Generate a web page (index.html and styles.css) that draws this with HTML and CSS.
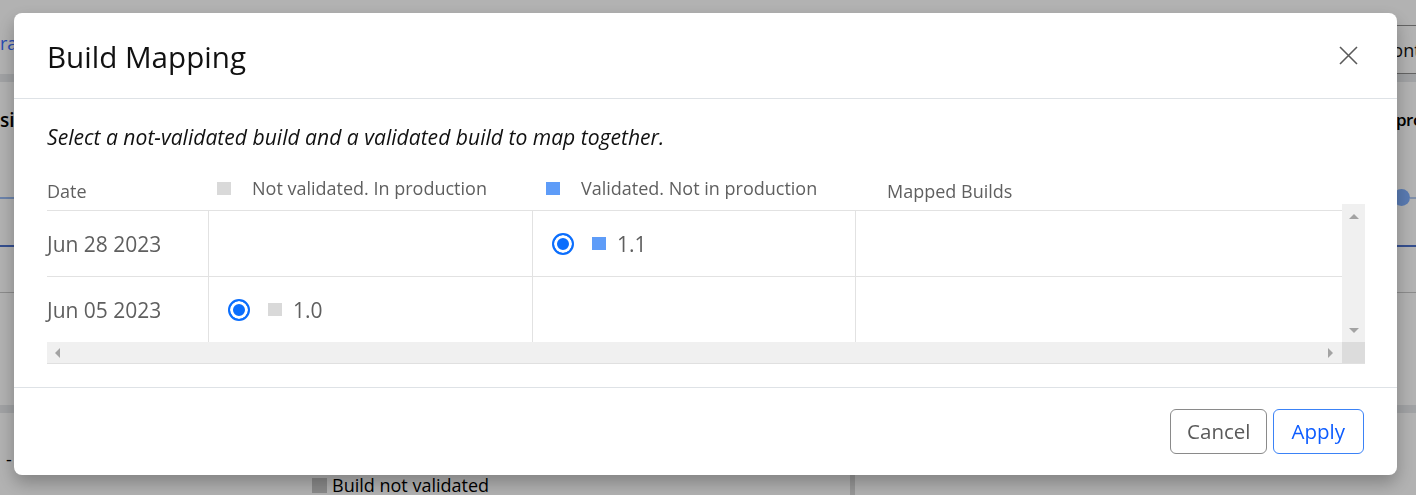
FILE: index.html
```html
<!DOCTYPE html>
<html lang="en">
<head>
<meta charset="utf-8">
<title>Build Mapping</title>
<link rel="stylesheet" href="styles.css">
</head>
<body>
<div class="page">
  <div class="page-top"></div>
  <nav class="page-tabs">
    <a class="nav-link">ra</a>
    <span class="tab-box">Content</span>
  </nav>
  <div class="page-band"></div>
  <div class="page-headings">
    <h2 class="heading-left">si</h2>
    <h2 class="heading-right">production</h2>
  </div>
  <div class="page-slider">
    <span class="track"></span>
    <span class="knob"></span>
    <span class="track-end"></span>
  </div>
  <div class="rule rule-dark"></div>
  <div class="page-section"></div>
  <div class="rule"></div>
  <div class="page-spacer"></div>
  <div class="page-band"></div>
  <div class="page-summary"><span class="dash">-</span></div>
  <div class="page-legend">
    <div class="legend-item"><span class="legend-swatch"></span>Build not validated</div>
    <div class="legend-panel"></div>
  </div>
</div>

<div class="backdrop"></div>

<div class="modal" role="dialog" aria-labelledby="mapping-title">
  <div class="modal-header">
    <h1 class="modal-title" id="mapping-title">Build Mapping</h1>
    <button class="close-btn" type="button" aria-label="Close">
      <svg width="19" height="19" viewBox="0 0 19 19" aria-hidden="true">
        <path d="M1 1 L18 18 M18 1 L1 18" stroke="#5a5a5a" stroke-width="1.6" fill="none"/>
      </svg>
    </button>
  </div>

  <div class="modal-body">
    <p class="hint">Select a not-validated build and a validated build to map together.</p>

    <div class="map-head">
      <div class="th th-plain">Date</div>
      <div class="th"><span class="swatch swatch-gray"></span>Not validated. In production</div>
      <div class="th"><span class="swatch swatch-blue"></span>Validated. Not in production</div>
      <div class="th th-plain">Mapped Builds</div>
    </div>

    <div class="map-scroll">
      <div class="map-rows">
        <div class="map-row">
          <div class="td td-date">Jun 28 2023</div>
          <div class="td"></div>
          <div class="td">
            <label class="build"><input type="radio" name="validated" checked><span class="swatch swatch-blue"></span>1.1</label>
          </div>
          <div class="td"></div>
        </div>
        <div class="map-row">
          <div class="td td-date">Jun 05 2023</div>
          <div class="td">
            <label class="build"><input type="radio" name="unvalidated" checked><span class="swatch swatch-gray"></span>1.0</label>
          </div>
          <div class="td"></div>
          <div class="td"></div>
        </div>
      </div>

      <div class="vscroll">
        <svg width="10" height="5" viewBox="0 0 10 5" aria-hidden="true"><polygon points="0,5 10,5 5,0" fill="#a3a3a3"/></svg>
        <svg width="10" height="5" viewBox="0 0 10 5" aria-hidden="true"><polygon points="0,0 10,0 5,5" fill="#a3a3a3"/></svg>
      </div>
      <div class="hscroll">
        <svg width="5" height="10" viewBox="0 0 5 10" aria-hidden="true"><polygon points="5,0 5,10 0,5" fill="#a3a3a3"/></svg>
        <svg width="5" height="10" viewBox="0 0 5 10" aria-hidden="true"><polygon points="0,0 0,10 5,5" fill="#a3a3a3"/></svg>
      </div>
      <div class="scroll-corner"></div>
    </div>
  </div>

  <div class="modal-footer">
    <button class="btn btn-cancel" type="button">Cancel</button>
    <button class="btn btn-apply" type="button">Apply</button>
  </div>
</div>
</body>
</html>
```

FILE: styles.css
```css
* {
  box-sizing: border-box;
}

html,
body {
  margin: 0;
  height: 100%;
}

body {
  background: #ffffff;
  overflow: hidden;
  font-family: "Open Sans", "Noto Sans", sans-serif;
  color: #212529;
}

/* ---------- page underneath the dialog ---------- */

.page {
  height: 495px;
  display: flex;
  flex-direction: column;
  color: #000;
}

.page-top {
  height: 25px;
  flex: none;
}

.page-tabs {
  height: 49px;
  flex: none;
  display: flex;
  align-items: center;
  justify-content: space-between;
  font-size: 18px;
}

.nav-link {
  color: #3a6cff;
  margin-bottom: 14px;
  white-space: nowrap;
}

.tab-box {
  align-self: stretch;
  width: 44px;
  padding-left: 8px;
  display: flex;
  align-items: center;
  white-space: nowrap;
  border: 1px solid #8f8f8f;
  border-right: 0;
  color: #111;
}

.page-band {
  height: 8px;
  flex: none;
  background: #e6e8eb;
}

.page-headings {
  height: 68px;
  flex: none;
  display: flex;
  justify-content: space-between;
  align-items: flex-start;
  padding-top: 26px;
}

.page-headings h2 {
  margin: 0;
  font-size: 19px;
  font-weight: 600;
  white-space: nowrap;
  line-height: 24px;
}

.heading-right {
  width: 20px;
  font-size: 17px !important;
  letter-spacing: -0.5px;
}

.page-slider {
  height: 95px;
  flex: none;
  display: flex;
  align-items: center;
}

.page-slider .track {
  flex: 1;
  height: 2px;
  background: #9bbcf5;
}

.page-slider .knob {
  width: 17px;
  height: 17px;
  border-radius: 50%;
  background: #80b0ff;
  flex: none;
}

.page-slider .track-end {
  width: 6px;
  height: 2px;
  background: #b7cdf3;
}

.rule {
  height: 1px;
  flex: none;
  background: #c8c8c8;
}

.rule-dark {
  height: 2px;
  background: #4c71cc;
}

.page-section {
  height: 45px;
  flex: none;
}

.page-spacer {
  height: 112px;
  flex: none;
}

.page-summary {
  height: 62px;
  flex: none;
  display: flex;
  align-items: flex-end;
  padding: 0 0 4px 6px;
  font-size: 18px;
}

.page-legend {
  flex: 1;
  display: grid;
  grid-template-columns: 850px 1fr;
}

.legend-item {
  display: flex;
  align-items: center;
  gap: 5px;
  padding-left: 312px;
  font-size: 18px;
  line-height: 19px;
  white-space: nowrap;
}

.legend-swatch {
  width: 15px;
  height: 15px;
  background: #c6c6c6;
}

.legend-panel {
  border-left: 5px solid #d9d9d9;
}

/* ---------- dialog ---------- */

.backdrop {
  position: fixed;
  inset: 0;
  background: rgba(0, 0, 0, 0.3);
}

.modal {
  position: fixed;
  top: 13px;
  left: 14px;
  width: 1383px;
  height: 462px;
  background: #fff;
  border-radius: 8px;
  display: flex;
  flex-direction: column;
  box-shadow: 0 8px 18px rgba(0, 0, 0, 0.28);
}

.modal-header {
  height: 86px;
  flex: none;
  display: flex;
  align-items: center;
  justify-content: space-between;
  padding: 3px 39px 0 33px;
  border-bottom: 1px solid #dee2e6;
}

.modal-title {
  margin: 0;
  font-size: 29.6px;
  font-weight: 400;
  line-height: 1.2;
  color: #111;
}

.close-btn {
  border: 0;
  padding: 0;
  background: none;
  width: 19px;
  height: 19px;
  margin-top: -3px;
  display: flex;
}

.modal-body {
  flex: 1;
  padding: 26px 32px 23px 33px;
}

.hint {
  margin: 0 0 21px;
  font-size: 21.1px;
  font-style: italic;
  line-height: 24px;
  color: #111;
}

/* column header */

.map-head {
  height: 34px;
  display: grid;
  grid-template-columns: 170px 329px 341px 1fr;
  align-items: start;
  padding-top: 6px;
  font-size: 18px;
  color: #5f5f5f;
}

.th {
  display: flex;
  align-items: center;
  line-height: 24px;
  white-space: nowrap;
}

.th .swatch {
  margin-right: 21px;
}

.th-plain {
  padding-top: 3px;
}

.swatch {
  width: 14px;
  height: 13px;
  flex: none;
}

.swatch-gray {
  background: #d9d9d9;
}

.swatch-blue {
  background: #5e9cf8;
}

/* scrolling grid */

.map-scroll {
  display: grid;
  grid-template-columns: 1fr 23px;
  grid-template-rows: 138px 22px;
}

.map-rows {
  padding-top: 6px;
}

.map-row {
  height: 66px;
  display: grid;
  grid-template-columns: 161px 324px 323px 1fr;
  border-top: 1px solid #e2e2e2;
}

.td {
  display: flex;
  align-items: center;
  border-left: 1px solid #e2e2e2;
  padding-left: 19px;
  font-size: 21px;
  color: #5f5f5f;
}

.td-date {
  border-left: 0;
  padding-left: 0;
}

.build {
  display: flex;
  align-items: center;
}

.build input {
  appearance: none;
  width: 22px;
  height: 22px;
  margin: 0 18px 0 0;
  border-radius: 50%;
  border: 2px solid #0b6efd;
  background: #0b6efd;
  box-shadow: inset 0 0 0 3px #fff;
}

.build .swatch {
  margin-right: 11px;
}

.vscroll {
  background: #f0f0f0;
  display: flex;
  flex-direction: column;
  justify-content: space-between;
  align-items: center;
  padding: 10px 0 9px;
}

.hscroll {
  background: #f0f0f0;
  display: flex;
  justify-content: space-between;
  align-items: center;
  padding: 0 9px 0 8px;
  border-bottom: 1px solid #e0e0e0;
}

.scroll-corner {
  background: #dcdcdc;
  border-bottom: 1px solid #e0e0e0;
}

/* footer */

.modal-footer {
  height: 88px;
  flex: none;
  display: flex;
  align-items: center;
  justify-content: flex-end;
  gap: 6px;
  padding-right: 33px;
  border-top: 1px solid #dee2e6;
}

.btn {
  height: 45px;
  border-radius: 6px;
  background: #fff;
  font-family: inherit;
  font-size: 20.5px;
  line-height: 1;
}

.btn-cancel {
  border: 1px solid #8a8a8a;
  color: #5a5a5a;
  padding: 0 15px 0 16px;
}

.btn-apply {
  border: 1px solid #3b82f6;
  color: #0d5cff;
  padding: 0 18px;
}
```
